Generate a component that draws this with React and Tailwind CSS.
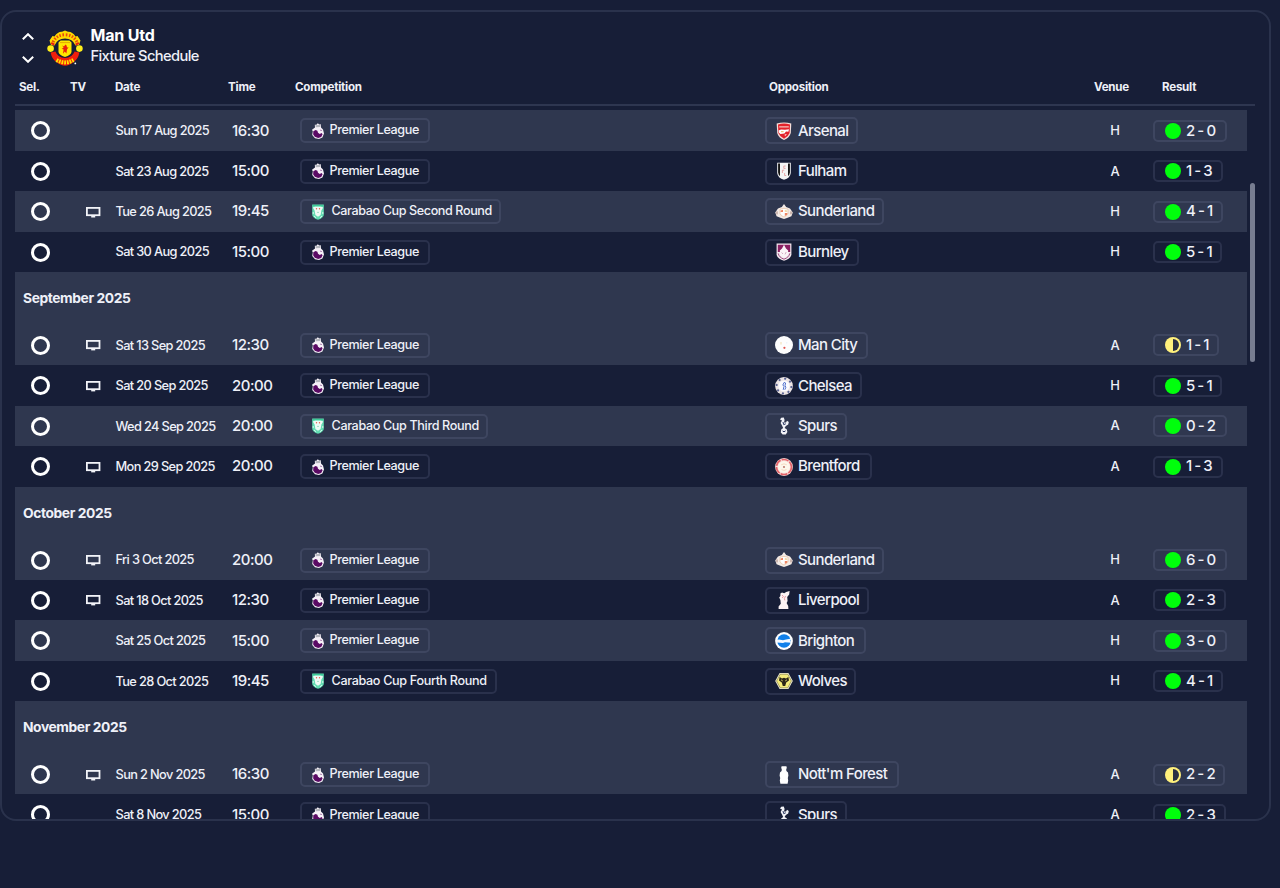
import clsx from "clsx";

const COMPETITIONS = {
  pl: { name: "Premier League", width: "w-[130px]", gap: "ml-[6px]", text: "tracking-[-0.37px]" },
  cc2: { name: "Carabao Cup Second Round", width: "w-[201px]", gap: "ml-[8px]", text: "tracking-[-0.4px]", cup: true },
  cc3: { name: "Carabao Cup Third Round", width: "w-[188px]", gap: "ml-[8px]", text: "tracking-[-0.36px]", cup: true },
  cc4: { name: "Carabao Cup Fourth Round", width: "w-[197px]", gap: "ml-[8px]", text: "tracking-[-0.34px]", cup: true },
};

const TEAMS = {
  Arsenal: "w-[93px]",
  Fulham: "w-[93px]",
  Sunderland: "w-[119px]",
  Burnley: "w-[94px]",
  "Man City": "w-[103px]",
  Chelsea: "w-[97px]",
  Spurs: "w-[82px]",
  Brentford: "w-[107px]",
  Liverpool: "w-[104px]",
  Brighton: "w-[101px]",
  Wolves: "w-[91px]",
  "Nott'm Forest": "w-[134px]",
};

const SCORES = {
  "2 - 0": "w-[74px]",
  "1 - 3": "w-[70px]",
  "4 - 1": "w-[70px]",
  "5 - 1": "w-[69px]",
  "1 - 1": "w-[66px]",
  "0 - 2": "w-[74px]",
  "6 - 0": "w-[74px]",
  "2 - 3": "w-[73px]",
  "3 - 0": "w-[74px]",
  "2 - 2": "w-[72px]",
};

const FIXTURES = [
  { date: "Sun 17 Aug 2025", time: "16:30", comp: "pl", team: "Arsenal", venue: "H", score: "2 - 0" },
  { date: "Sat 23 Aug 2025", time: "15:00", comp: "pl", team: "Fulham", venue: "A", score: "1 - 3" },
  { date: "Tue 26 Aug 2025", time: "19:45", comp: "cc2", team: "Sunderland", venue: "H", score: "4 - 1", tv: true },
  { date: "Sat 30 Aug 2025", time: "15:00", comp: "pl", team: "Burnley", venue: "H", score: "5 - 1" },
  { month: "September 2025" },
  { date: "Sat 13 Sep 2025", time: "12:30", comp: "pl", team: "Man City", venue: "A", score: "1 - 1", tv: true, draw: true },
  { date: "Sat 20 Sep 2025", time: "20:00", comp: "pl", team: "Chelsea", venue: "H", score: "5 - 1", tv: true },
  { date: "Wed 24 Sep 2025", time: "20:00", comp: "cc3", team: "Spurs", venue: "A", score: "0 - 2" },
  { date: "Mon 29 Sep 2025", time: "20:00", comp: "pl", team: "Brentford", venue: "A", score: "1 - 3", tv: true },
  { month: "October 2025" },
  { date: "Fri 3 Oct 2025", time: "20:00", comp: "pl", team: "Sunderland", venue: "H", score: "6 - 0", tv: true },
  { date: "Sat 18 Oct 2025", time: "12:30", comp: "pl", team: "Liverpool", venue: "A", score: "2 - 3", tv: true },
  { date: "Sat 25 Oct 2025", time: "15:00", comp: "pl", team: "Brighton", venue: "H", score: "3 - 0" },
  { date: "Tue 28 Oct 2025", time: "19:45", comp: "cc4", team: "Wolves", venue: "H", score: "4 - 1" },
  { month: "November 2025" },
  { date: "Sun 2 Nov 2025", time: "16:30", comp: "pl", team: "Nott'm Forest", venue: "A", score: "2 - 2", tv: true, draw: true },
  { date: "Sat 8 Nov 2025", time: "15:00", comp: "pl", team: "Spurs", venue: "A", score: "2 - 3" },
];

function ClubCrest() {
  return (
    <svg width="36" height="36" viewBox="0 0 36 36">
      {/* top and bottom ribbons */}
      <path d="M2.5 10.5 L5.5 6 L7.5 6.4 Q11 1.4 15 1.8 L18 0.4 L21 1.8 Q25 1.4 28.5 6.4 L30.5 6 L33.5 10.5 L32 15 L28.5 15.5 Q25.5 8.6 18 8.6 Q10.5 8.6 7.5 15.5 L4 15Z" fill="#ffd900" />
      <path d="M6 12.2 Q9.5 4.8 18 4.8 Q26.5 4.8 30 12.2" fill="none" stroke="#e8480e" strokeWidth="3" strokeDasharray="1.5 1.6" />
      <path d="M3.6 22.5 L8.4 21.5 Q11 28 18 28 Q25 28 27.6 21.5 L32.4 22.5 Q31 29.5 26.6 32 Q22 35.8 18 35.8 Q14 35.8 9.4 32 Q5 29.5 3.6 22.5Z" fill="#f01e0c" />
      <path d="M9.5 30 Q18 34.8 26.5 30" fill="none" stroke="#ffe000" strokeWidth="4" strokeDasharray="1.8 0.9" />
      <path d="M4.2 13 L7.4 14.6 M31.8 13 L28.6 14.6" stroke="#ee1c10" strokeWidth="2" />
      <circle cx="3.6" cy="18.6" r="3.3" fill="#ffef1a" />
      <circle cx="32.4" cy="18.6" r="3.3" fill="#ffef1a" />
      {/* shield */}
      <path d="M11.5 12.4 L13.6 10.4 H22.4 L24.5 12.4 V22 Q24 25.2 18 27 Q12 25.2 11.5 22Z" fill="#ffe800" />
      <path d="M13 12.6 H23" stroke="#e5ad00" strokeWidth="1" />
      <path d="M15.2 15.6 L17 16.4 L18.4 14.6 L19.6 15.4 L20 17.4 L21.6 17.2 L20 19.6 L19.4 23.4 L17.8 21.4 L16 23.8 L16.6 19.4 L14.6 18.8 L16.6 17.8Z" fill="#e8200c" />
      <circle cx="28.3" cy="33.4" r="0.9" fill="#fff" />
    </svg>
  );
}

function LionIcon() {
  return (
    <svg width="12" height="16" viewBox="0 0 12 16" className="shrink-0">
      <path d="M2.8 1.8 L4.4 1.8 L5.8 0.2 L7.2 1.4 L8.8 1.2 L9 4.5 L11 6.6 L12 10.6 L10.4 14.4 L7 15.9 L3 15.2 L0.2 12 L0.8 8.6 L0 6.8 L3 4.6Z" fill="#f6f1f8" />
      <path d="M3.2 2.2 L8.4 1.8 L8.2 4.1 L3.8 4.3Z" fill="#b4b6bd" />
      <path d="M1.3 8.2 L3.6 7 L5.4 7.8 L6 9.8 L7.8 11 L9.6 10 L10.6 11.2 L9.2 14 L6.2 15 L2.8 13.8 L1.2 11.4Z" fill="#5a0a64" />
      <path d="M8.6 6.8 L9.4 8" stroke="#5a0a64" strokeWidth="0.8" />
    </svg>
  );
}

function CupIcon() {
  return (
    <svg width="12" height="16" viewBox="0 0 12 16" className="shrink-0">
      <path d="M0.2 0.4 H11.8 V11 Q11 14.2 6 15.8 Q1 14.2 0.2 11Z" fill="#62dcb2" />
      <path d="M0.8 3.4 L3.4 2.4 H8.6 L11.2 3.4 L9.4 6.4 L8.6 11 L6 12.8 L3.4 11 L2.6 6.4Z" fill="#effbf6" />
      <path d="M0.8 1.6 H11.2" stroke="#3ecb98" strokeWidth="1.2" />
      <path d="M2 12 L4 13.8 M10 12 L8 13.8 M1.2 8 V10 M10.8 8 V10" stroke="#e3faf1" strokeWidth="0.9" />
      <circle cx="4.5" cy="4.8" r="0.7" fill="#e65a4c" />
      <circle cx="7.5" cy="4.8" r="0.7" fill="#e65a4c" />
      <path d="M5 8.4 H7" stroke="#8ed8bd" strokeWidth="0.8" />
    </svg>
  );
}

const BADGES = {
  Arsenal: (
    <>
      <path d="M1.7 1.6 Q9 -0.8 16.3 1.6 L15.8 11 Q14.4 16 9 17.9 Q3.6 16 2.2 11Z" fill="#f6ded9" />
      <path d="M3 2.6 Q9 0.6 15 2.6 L14.6 11 Q13 15 9 16.8 Q5 15 3.4 11Z" fill="#e3222b" />
      <path d="M4.2 4.9 H13.8" stroke="#f7c3bd" strokeWidth="1.2" />
      <path d="M3.6 8.6 L6 7.4 L10 7.8 L14 7.2 L13.4 9.8 L11 9.6 L9.4 11.4 L5.4 12 L4 10.8Z" fill="#fff" />
      <path d="M6 9.7 H8.6" stroke="#e8a94c" strokeWidth="0.9" />
      <path d="M9.6 12.4 L12 12 L10 14.2Z" fill="#f6ded9" />
    </>
  ),
  Fulham: (
    <>
      <path d="M2.2 0.8 H15.8 V11 Q15.3 16 9 17.8 Q2.7 16 2.2 11Z" fill="#f5f5f5" />
      <path d="M3.1 1.4 H5 V14 Q3.4 13 3.1 10.5Z M13 1.4 H14.9 V10.5 Q14.6 13 13 14Z" fill="#151515" />
      <path d="M10.7 4 H8.8 V6.4 H10.6 M7.4 8.2 H9.2 M7.4 8.2 V11 M9.6 11 V13.5 H11.2" stroke="#e08a8a" strokeWidth="0.7" fill="none" />
    </>
  ),
  Sunderland: (
    <>
      <path d="M9 1 L11.2 4 L15 5.6 L17.8 9.5 L16.4 13.3 L12 15 L9 16 L6 15 L1.6 13.3 L0.2 9.5 L3 5.6 L6.8 4Z" fill="#f4ebe6" />
      <path d="M5 6.2 Q9 4.4 13 6.2 V10.6 Q12 13 9 14 Q6 13 5 10.6Z" fill="#fff" stroke="#e6bf9c" strokeWidth="0.7" />
      <path d="M5.6 7.4 L8 6.8 V9 H5.6Z M9.8 10 H12.6 L11.8 12 L9.8 13Z" fill="#ee8664" />
      <path d="M9.8 6.8 L12.2 7.6 V9 H9.8Z" fill="#f3dcae" />
      <path d="M2 8.4 V11.4 M16 8.4 V11.4" stroke="#a8857c" strokeWidth="1" />
    </>
  ),
  Burnley: (
    <>
      <path d="M1.6 0.6 H16.4 V12 Q15 16.2 9 17.8 Q3 16.2 1.6 12Z" fill="#f4e9f0" />
      <path d="M2.8 1.8 H15.2 V9 H2.8Z" fill="#8a1f62" />
      <path d="M3.2 10.4 Q4 14.4 9 16.2 Q14 14.4 14.8 10.4" fill="none" stroke="#9a4a7e" strokeWidth="1" />
      <path d="M9 1.8 L11 5.4 L13.2 7.4 L12.8 12.4 L9 14.6 L5.2 12.4 L4.8 7.4 L7 5.4Z" fill="#faf4f8" />
      <path d="M6.6 9.5 L8 11 M11.2 9 L10 11.4" stroke="#c999b6" strokeWidth="0.8" />
    </>
  ),
  "Man City": (
    <>
      <circle cx="9" cy="9" r="9" fill="#fdfdfd" />
      <path d="M6 6 V8.4" stroke="#f2dfb4" strokeWidth="1.1" />
      <circle cx="9.4" cy="11.8" r="1.1" fill="#e0564f" />
      <circle cx="11.8" cy="6.8" r="0.6" fill="#dceaf6" />
    </>
  ),
  Chelsea: (
    <>
      <circle cx="9" cy="9" r="8.9" fill="#ece4e4" />
      <circle cx="9" cy="9" r="7.4" fill="none" stroke="#5b6494" strokeWidth="1.8" strokeDasharray="2 3.8" />
      <circle cx="9" cy="9" r="5.6" fill="#fbfbff" />
      <path d="M8.2 12.8 L9 9.4 L7.8 8 L9.2 5.4 L10.6 6 L10 8.4 L10.8 10.4 L9.8 12.8" stroke="#5070cc" strokeWidth="1" fill="none" />
    </>
  ),
  Spurs: (
    <>
      <path d="M6.2 0.8 L8.8 0.6 L9.6 3 L9 5.4 L11 5.4 L12 3.8 L13.8 5 L13.2 7.6 L10.8 9 L9.6 11 L11.7 12.2 L12.4 15 L10.8 17.6 L7.6 17.6 L5.8 15.4 L6.2 12.6 L8.2 11 L7 8.6 L5.6 6 L7 3.6 L5 2.4Z" fill="#f2f3f8" />
      <path d="M8 5 L8.7 7.6 L10.8 6.8 M7.6 14 L9 14.8 L10.6 13.8" stroke="#27345f" strokeWidth="1" fill="none" />
    </>
  ),
  Brentford: (
    <>
      <circle cx="9" cy="9" r="8.9" fill="#f9dcd8" />
      <circle cx="9" cy="9" r="7.5" fill="none" stroke="#e4636a" strokeWidth="1.6" strokeDasharray="7 1.2" />
      <circle cx="9" cy="9" r="6" fill="#fdf7ec" />
      <path d="M6.2 6.8 Q9 4.8 11.8 6.8 M6.5 11.5 Q9 13.4 11.5 11.5" stroke="#f4d3b6" strokeWidth="0.8" fill="none" />
      <circle cx="9" cy="9" r="0.9" fill="#b0665c" />
    </>
  ),
  Liverpool: (
    <>
      <path d="M5.4 2.6 L7 1.4 L9.2 2.2 L11.2 1 L14.6 0 L14.2 3.6 L12.2 6 L12.6 10 L11.6 12 L13.2 15 L13.4 18 H3.6 L3.6 15.4 L5.8 12.8 L5.4 9 L4.2 6.6 L5.4 5Z" fill="#fdf4f5" />
      <path d="M7 4 L8.4 5.4 L7.2 7 M10.6 5 L9.4 7.4 L9.8 9.4" stroke="#e8929c" strokeWidth="0.9" fill="none" />
    </>
  ),
  Brighton: (
    <>
      <circle cx="9" cy="9" r="8.9" fill="#fff" />
      <circle cx="9" cy="9" r="6.7" fill="#1180ea" />
      <path d="M1.5 8 L4 7.6 L8 8.2 L11 7.4 L16.5 6.6 L15 8.6 L16.5 10.8 L10 10.2 L8 11 L2 10.4Z" fill="#f4f9ff" />
    </>
  ),
  Wolves: (
    <>
      <path d="M4.6 1 H13.4 L17.8 9 L13.4 17 H4.6 L0.2 9Z" fill="#f4f0d2" />
      <path d="M5.2 2.2 H12.8 L16.4 9 L12.8 15.8 H5.2 L1.6 9Z" fill="#f5ec7a" stroke="#77713f" strokeWidth="0.6" />
      <path d="M4.6 5 L7 6.4 L9 5.8 L11 6.4 L13.4 5 L14 8.4 L11.2 10.6 L10.2 14 H7.8 L6.8 10.6 L4 8.4Z" fill="#2b2519" />
      <path d="M6 7.8 L7.8 9 M12 7.8 L10.2 9" stroke="#f5ec7a" strokeWidth="0.8" />
    </>
  ),
  "Nott'm Forest": (
    <path d="M6.6 0.2 H11.4 L11.8 1.8 L11.2 3.6 L11.4 5 L13 6.6 L13.4 9.4 L12.8 12 L13.2 14.4 L12.6 17.8 H5.4 L4.8 14.4 L5.2 12 L4.6 9.4 L5 6.6 L6.6 5 L6.8 3.6 L6.2 1.8Z" fill="#fff" />
  ),
};

function TvIcon() {
  return (
    <svg width="15" height="12" viewBox="0 0 15 12">
      <rect x="0.9" y="1.9" width="12.6" height="7.3" fill="none" stroke="#f2f3f8" strokeWidth="1.8" />
      <path d="M5.2 10.6 H9.2" stroke="#f2f3f8" strokeWidth="1.6" />
    </svg>
  );
}

function ResultDot({ draw }) {
  return (
    <svg width="16" height="16" viewBox="0 0 16 16" className="shrink-0">
      <circle cx="8" cy="8" r="8" fill={draw ? "#fff07c" : "#00ff0c"} />
      {draw && <path d="M8 2 A6 6 0 0 1 8 14Z" fill="#2b3043" />}
    </svg>
  );
}

function Pill({ className, children }) {
  return (
    <div className={clsx("flex items-center rounded-[5px] border-2 border-[#8f98b8]/16 whitespace-nowrap", className)}>
      {children}
    </div>
  );
}

function FixtureRow({ fixture, striped }) {
  const comp = COMPETITIONS[fixture.comp];
  return (
    <div
      className={clsx(
        "grid h-[40.4px] shrink-0 grid-cols-[51px_49px_117px_68px_465px_325px_50px_1fr] items-center pt-[0.6px]",
        striped && "bg-[#2f374f]"
      )}
    >
      <div className="flex justify-center">
        <div className="size-[19px] rounded-full border-3 border-white" />
      </div>
      <div className="pl-[20px]">{fixture.tv && <TvIcon />}</div>
      <div className="pl-[0.5px] text-[12.8px] tracking-[-0.64px] whitespace-nowrap">{fixture.date}</div>
      <div className="text-[15px] tracking-[-0.5px]">{fixture.time}</div>
      <Pill className={clsx("h-[25px] pl-[9.5px]", comp.width)}>
        {comp.cup ? <CupIcon /> : <LionIcon />}
        <span className={clsx("text-[12.6px]", comp.gap, comp.text)}>{comp.name}</span>
      </Pill>
      <Pill className={clsx("h-[27px] pl-[8px]", TEAMS[fixture.team])}>
        <svg width="18" height="18" viewBox="0 0 18 18" className="shrink-0">
          {BADGES[fixture.team]}
        </svg>
        <span className="ml-[5px] text-[15px] tracking-[-0.6px]">{fixture.team}</span>
      </Pill>
      <div className="text-center text-[13px]">{fixture.venue}</div>
      <div className="pl-[13px]">
        <Pill className={clsx("h-[22px] pl-[10px]", SCORES[fixture.score])}>
          <ResultDot draw={fixture.draw} />
          <span className="ml-[5px] text-[15px] tracking-[-0.3px] [word-spacing:-1.3px]">{fixture.score}</span>
        </Pill>
      </div>
    </div>
  );
}

export default function App() {
  return (
    <div className="h-[888px] w-[1280px] overflow-hidden bg-[#171e37] pt-[10px] font-['Inter','Liberation_Sans',sans-serif] font-medium text-[#eef0f8]">
      <div className="flex h-[811px] w-[1271px] flex-col overflow-hidden rounded-[16px] border-2 border-[#2a324c] pl-[13px]">
        <div className="flex h-[59px] shrink-0 items-end">
          <div className="mb-[8px] ml-[7px] flex flex-col gap-[16px]">
            <svg width="12" height="7" viewBox="0 0 12 7" fill="none" stroke="#fff" strokeWidth="2">
              <path d="M0.8 6.2 L6 1.2 L11.2 6.2" />
            </svg>
            <svg width="12" height="7" viewBox="0 0 12 7" fill="none" stroke="#fff" strokeWidth="2">
              <path d="M0.8 0.8 L6 5.8 L11.2 0.8" />
            </svg>
          </div>
          <div className="mb-[5.5px] ml-[12.5px]">
            <ClubCrest />
          </div>
          <div className="mb-[4.5px] ml-[8px] leading-[21px]">
            <h1 className="text-[16px] font-bold tracking-[-0.2px] text-white">Man Utd</h1>
            <p className="text-[14.7px] tracking-[-0.62px]">Fixture Schedule</p>
          </div>
        </div>

        <div className="grid h-[35px] w-[1240px] shrink-0 grid-cols-[51px_45px_113px_67px_474px_325px_68px_1fr] items-center border-b-2 border-[#2e3650] pl-[4px] text-[11.6px] font-bold tracking-[-0.25px]">
          <span>Sel.</span>
          <span>TV</span>
          <span>Date</span>
          <span>Time</span>
          <span>Competition</span>
          <span>Opposition</span>
          <span>Venue</span>
          <span>Result</span>
        </div>

        <div className="flex min-h-0 grow pt-[4.4px]">
          <div className="flex w-[1232px] shrink-0 flex-col overflow-hidden">
            {FIXTURES.map((f, i) =>
              f.month ? (
                <div key={f.month} className="flex h-[53px] shrink-0 items-center bg-[#2f374f] pl-[8px] text-[13.8px] font-bold tracking-[-0.4px]">
                  {f.month}
                </div>
              ) : (
                <FixtureRow key={f.date} fixture={f} striped={[0, 2, 5, 7, 10, 12, 15].includes(i)} />
              )
            )}
          </div>
          <div className="mt-[73px] ml-[3px] h-[179px] w-[5px] rounded-full bg-[#777d90]" />
        </div>
      </div>
    </div>
  );
}
